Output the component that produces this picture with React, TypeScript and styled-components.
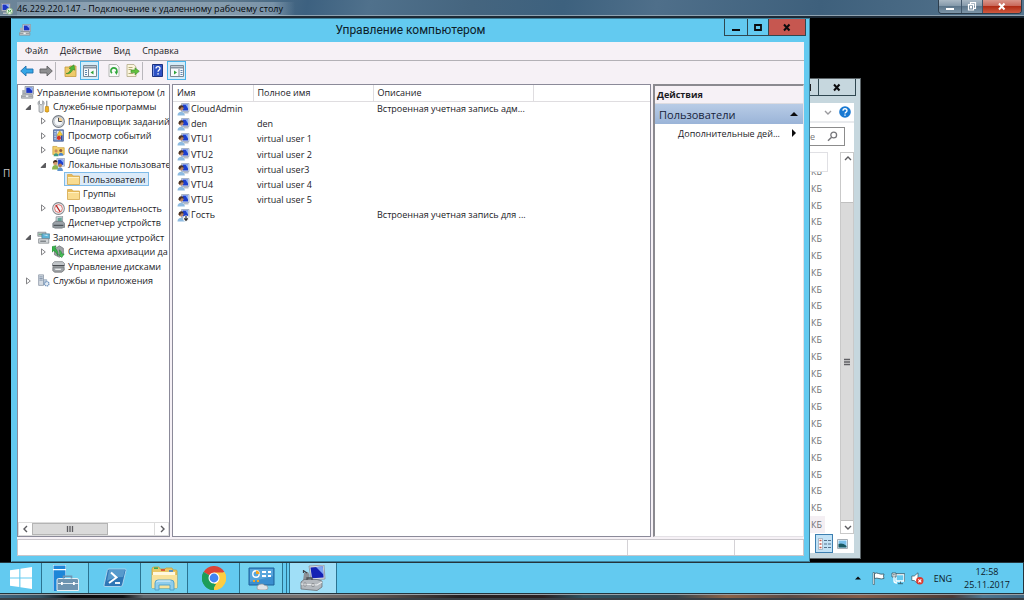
import React from "react";
import styled, { createGlobalStyle, css } from "styled-components";

const GlobalStyle = createGlobalStyle`
  *, *::before, *::after { box-sizing: border-box; }
  body { margin: 0; background: #000; font-family: "Open Sans", "Noto Sans", sans-serif; font-size: 9px; color: #1b1b1f; overflow: hidden; }
  button, input, table { font: inherit; color: inherit; }
  button { margin: 0; padding: 0; border: 0; background: none; display: flex; align-items: center; justify-content: center; }
  svg { display: block; flex: none; }
  ul { list-style: none; margin: 0; padding: 0; }
  h1, h2, p { margin: 0; font-weight: 400; }
`;

const Screen = styled.div`
  height: 100vh;
  display: flex;
  flex-direction: column;
  white-space: nowrap;
`;

/* ---------- outer remote session bar ---------- */

const HostBar = styled.header`
  flex: none;
  height: 18px;
  display: flex;
  align-items: flex-start;
  background: linear-gradient(100deg, #6d8599 0%, #5d788c 22%, #3d6180 30%, #50718c 36%, #45657f 46%, #3d617e 55%, #4f6f8a 64%, #3e607c 80%, #56758e 100%);
  border-bottom: 2px solid #1d2a36;
  box-shadow: inset 0 -1px 0 #8fa3b2;
`;

const HostTitle = styled.h1`
  flex: 1;
  display: flex;
  align-items: center;
  gap: 4px;
  height: 17px;
  padding-left: 1px;
  font-size: 9px;
  color: #05080c;
  span {
    padding-right: 12px;
    background: linear-gradient(90deg, rgba(190, 206, 220, 0.2), rgba(190, 206, 220, 0.45) 30%, rgba(190, 206, 220, 0.4) 92%, transparent);
    line-height: 14px;
  }
`;

const HostControls = styled.div`
  display: flex;
  height: 14px;
  margin-right: 2px;
  border: 1px solid #2d3e4d;
  border-top: 0;
  border-radius: 0 0 4px 4px;
  overflow: hidden;
`;

const HostButton = styled.button<{ $w: number; $danger?: boolean }>`
  width: ${(p) => p.$w}px;
  border-right: ${(p) => (p.$danger ? 0 : "1px solid #40566a")};
  background: ${(p) =>
    p.$danger
      ? "linear-gradient(#d9958a, #c9685a 45%, #b02c16 50%, #cf5a40)"
      : "linear-gradient(#a9b8c4, #8499aa 45%, #5c768b 50%, #7d95a8)"};
`;

/* ---------- desktop ---------- */

const Desktop = styled.main`
  flex: 1;
  position: relative;
  overflow: hidden;
  background: #000;
`;

const DesktopLabel = styled.p`
  padding: 148px 0 0 3px;
  font-size: 10px;
  line-height: 14px;
  color: #c8c8c8;
`;

const BackWindow = styled.section`
  position: absolute;
  top: 60px;
  right: 163px;
  bottom: 3px;
  width: 110px;
  display: flex;
  flex-direction: column;
  padding: 0 6px 5px 0;
  border: 1px solid #5c6468;
  background: #c6d7de;
`;

const MainWindow = styled.section`
  position: absolute;
  top: 0;
  left: 11px;
  right: 214px;
  bottom: 0;
  display: flex;
  flex-direction: column;
  padding: 0 5px 5px;
  border: 1px solid #3f7f99;
  border-left-color: #63caf0;
  background: #63caf0;
`;

const Caption = styled.header`
  flex: none;
  height: 23px;
  display: flex;
  align-items: flex-start;
  margin-right: -2px;
`;

const CaptionTitle = styled.h2`
  flex: 1;
  padding-left: 66px;
  text-align: center;
  font-family: Roboto, "Open Sans", sans-serif;
  font-size: 12px;
  line-height: 23px;
  color: #0d2029;
`;

const CaptionIcon = styled.span`
  padding: 5px 0 0 2px;
`;

const Controls = styled.div`
  display: flex;
  height: 17px;
  border: 1px solid #2f4750;
  border-top: 0;
`;

const ControlButton = styled.button<{ $w: number; $danger?: boolean }>`
  width: ${(p) => p.$w}px;
  border-left: 1px solid #2f4750;
  background: ${(p) => (p.$danger ? "#c65750" : "transparent")};
  &:first-child { border-left: 0; }
`;

const Client = styled.div`
  flex: 1;
  min-height: 0;
  display: flex;
  flex-direction: column;
  background: #f6f1f6;
`;

const MenuBar = styled.nav`
  flex: none;
  display: flex;
  gap: 12px;
  height: 19px;
  padding: 0 8px;
  border-bottom: 1px solid #b3b1b6;
  line-height: 18px;
`;

const Toolbar = styled.div`
  flex: none;
  display: flex;
  align-items: center;
  height: 23px;
  padding-bottom: 4px;
`;

const ToolButton = styled.button<{ $on?: boolean; $gap?: number }>`
  width: 19px;
  height: 19px;
  margin-left: ${(p) => p.$gap ?? 0}px;
  ${(p) =>
    p.$on &&
    css`
      border: 1px solid #4bb3e8;
      background: #d3ecf9;
    `}
`;

const ToolSeparator = styled.span`
  width: 1px;
  height: 18px;
  background: #b9b7bc;
`;

const Panes = styled.div`
  flex: 1;
  min-height: 0;
  display: grid;
  grid-template-columns: 153px minmax(0, 1fr) 151px;
  gap: 2px;
`;

const Pane = styled.section`
  display: flex;
  flex-direction: column;
  min-width: 0;
  overflow: hidden;
  background: #fff;
  border: 1px solid #8b8a99;
`;

const ActionsPane = styled(Pane)`
  border-color: #8b8a90 #e4e1e6 #e4e1e6 #8b8a90;
  border-width: 2px 1px 1px 2px;
`;

/* ---------- tree ---------- */

const Tree = styled.ul`
  flex: none;
  height: 203px;
  display: flex;
  flex-direction: column;
`;

const TreeRow = styled.li<{ $level: number }>`
  flex: 1;
  min-height: 0;
  display: flex;
  align-items: center;
  padding-left: ${(p) => [0, 4, 19, 34][p.$level]}px;
`;

const Twisty = styled.span`
  width: 12px;
  flex: none;
  display: flex;
  justify-content: center;
`;

const TreeLabel = styled.span<{ $selected?: boolean }>`
  display: flex;
  align-items: center;
  gap: 3px;
  height: 14px;
  padding: 0 2px;
  border: 1px solid ${(p) => (p.$selected ? "#7fbbe8" : "transparent")};
  background: ${(p) => (p.$selected ? "#dcebf9" : "transparent")};
`;

const HScroll = styled.div`
  display: flex;
  height: 14px;
  margin-top: auto;
  border: 1px solid #dcdcdc;
`;

const HThumb = styled.span`
  width: 76px;
  display: flex;
  align-items: center;
  justify-content: center;
  background: #dadada;
  border: 1px solid #b4b4b4;
`;

const ScrollButton = styled.button`
  width: 13px;
  height: 12px;
  flex: none;
`;

const ScrollGap = styled.span`
  flex: 1;
  border-right: 1px solid #dcdcdc;
`;

/* ---------- user list ---------- */

const UserTable = styled.table`
  width: 100%;
  height: 138px;
  border-collapse: collapse;
  table-layout: fixed;
  th, td { padding: 0 0 0 4px; text-align: left; font-weight: 400; line-height: 14px; }
  th { height: 16px; border-right: 1px solid #dfdde0; border-bottom: 1px solid #dfdde0; }
  th:last-child { border-right: 0; }
`;

const UserName = styled.span`
  display: flex;
  align-items: center;
  gap: 1px;
`;

/* ---------- actions ---------- */

const ActionsTitle = styled.h2`
  padding-left: 2px;
  background: #f6f1f6;
  border-bottom: 1px solid #dedce0;
  font-size: 9px;
  font-weight: 700;
  line-height: 17px;
`;

const ActionsGroup = styled.button`
  justify-content: space-between;
  height: 20px;
  padding: 0 5px 0 4px;
  background: linear-gradient(#b8cce6, #9ab4d8);
  font-size: 11px;
  color: #17243c;
`;

const ActionsItem = styled.button`
  justify-content: flex-end;
  gap: 10px;
  height: 18px;
  padding-right: 5px;
`;

const StatusBar = styled.footer`
  flex: none;
  height: 17px;
  margin-top: 2px;
  display: flex;
  justify-content: flex-end;
  background: #fff;
  border: 1px solid #c9c6cb;
  span { border-left: 1px solid #d4d2d6; }
  span:first-child { width: 107px; }
  span:last-child { width: 69px; }
`;

/* ---------- background explorer window ---------- */

const BackClient = styled.div`
  flex: 1;
  min-height: 0;
  display: flex;
  flex-direction: column;
  background: #fff;
`;

const BackCaption = styled.header`
  flex: none;
  display: flex;
  justify-content: flex-end;
  height: 24px;
  margin-right: -2px;
`;

const Ribbon = styled.div`
  flex: none;
  display: flex;
  align-items: center;
  justify-content: flex-end;
  gap: 7px;
  height: 20px;
  padding-right: 3px;
  border-bottom: 2px solid #e9ebee;
`;

const SearchRow = styled.label`
  flex: none;
  display: flex;
  align-items: center;
  height: 19px;
  margin: 4px 9px 6px 0;
  padding-right: 6px;
  border: 1px solid #8c8c8c;
`;

const SearchInput = styled.input`
  flex: 1;
  min-width: 0;
  padding: 0 12px 0 0;
  border: 0;
  background: none;
  text-align: right;
  color: #77777b;
  outline: none;
`;

const FileArea = styled.div`
  flex: 1;
  min-height: 0;
  display: flex;
`;

const FileColumn = styled.div`
  flex: 1;
  display: flex;
  flex-direction: column;
`;

const ColumnHeader = styled.div`
  flex: none;
  height: 20px;
  margin-right: 12px;
  margin-bottom: -9px;
  position: relative;
  background: #fff;
  border: 1px solid #e0e0e4;
`;

const SizeList = styled.ul`
  flex: 1;
  min-height: 0;
  display: flex;
  flex-direction: column;
  margin: 0 15px 1px 0;
`;

const SizeItem = styled.li<{ $hot?: boolean }>`
  flex: 1;
  min-height: 0;
  display: flex;
  align-items: center;
  justify-content: flex-end;
  padding-right: 3px;
  color: #707074;
  background: ${(p) => (p.$hot ? "#f4eff3" : "transparent")};
`;

const VScroll = styled.div`
  width: 14px;
  display: flex;
  flex-direction: column;
  border: 1px solid #c9c9c9;
`;

const VThumb = styled.span`
  flex: 1;
  margin-top: 37px;
  display: flex;
  align-items: center;
  justify-content: center;
  background: #dadada;
  border: 1px solid #c0c0c0;
  border-width: 1px 0;
`;

const ViewBar = styled.div`
  flex: none;
  display: flex;
  justify-content: flex-end;
  height: 19px;
  padding-right: 3px;
`;

const ViewButton = styled.button<{ $on?: boolean }>`
  width: 18px;
  height: 19px;
  border: ${(p) => (p.$on ? "1px solid #3c7fb1" : "0")};
  background: ${(p) => (p.$on ? "#c2e2f6" : "none")};
`;

/* ---------- taskbar ---------- */

const Taskbar = styled.footer`
  flex: none;
  display: flex;
  height: 32px;
  background: #63caf0;
  border: 1px solid #24343c;
  border-width: 1px 1px 1px 0;
`;

const TaskButton = styled.button<{ $w: number; $tone?: "open" | "active" }>`
  width: ${(p) => p.$w}px;
  border-right: 1px solid #2b7390;
  background: ${(p) => (p.$tone === "active" ? "#a0dff7" : p.$tone === "open" ? "#73d1ef" : "transparent")};
`;

const TaskStack = styled.span<{ $w: number }>`
  width: ${(p) => p.$w}px;
  border-right: 1px solid #2b7390;
`;

const Tray = styled.div`
  flex: 1;
  display: flex;
  align-items: center;
  justify-content: flex-end;
  padding-right: 13px;
  gap: 10px;
  color: #0d2029;
`;

const TrayIcons = styled.div`
  display: flex;
  align-items: center;
  gap: 6px;
`;

const Clock = styled.time`
  margin-left: 2px;
  text-align: center;
  line-height: 13px;
`;

const HostEdge = styled.div`
  flex: none;
  height: 6px;
  border: 1px solid #98a0a6;
  border-width: 1px 0;
  background: linear-gradient(90deg, #3f6580 0%, #35505f 4%, #0b0b0d 7%, #101114 12%, #5f656b 14%, #77716e 30%, #5b5451 37%, #241f20 45%, #2a2122 53%, #2f5261 57%, #37444b 66%, #8b6248 71%, #5a4a45 77%, #845c49 84%, #4b3a36 93%, #4e7690 96%, #41647e 100%);
  border-bottom: 2px solid #3a4046;
`;

/* ---------- icons ---------- */

type IconProps = { size?: number };

const ComputerIcon = ({ size = 13 }: IconProps) => (
  <svg width={size} height={size} viewBox="0 0 16 16">
    <path d="M5 0.5h10.5v9.5H5z" fill="#d6dae0" stroke="#8a909a" />
    <path d="M6.5 2h7.5v6.5H6.5z" fill="#1b35c4" />
    <path d="M10 2h4v4z" fill="#8fb0f4" />
    <path d="M1.500 5h3.500v5H1.500z" fill="#aab0b8" />
    <path d="M0.5 12l2-2h10l2 1.500v3.500H.5z" fill="#c3c7cb" stroke="#7d8288" strokeWidth=".8" />
    <path d="M1 12.500h13" stroke="#74797f" strokeWidth=".8" />
    <path d="M6 11.500h3v2H6z" fill="#eef0f2" />
  </svg>
);

const RemoteIcon = () => (
  <svg width="12" height="13" viewBox="0 0 12 13">
    <path d="M.5 1.500h8.500v7.500H.5z" fill="#d6dae0" stroke="#8a909a" />
    <path d="M1.500 2.500H8V8H1.500z" fill="#1b35c4" />
    <path d="M4.500 2.500H8V6z" fill="#8fb0f4" />
    <path d="M2 10.500h5v1.500H2z" fill="#b9bec5" />
    <circle cx="8.500" cy="9.200" r="3.200" fill="#e6f2e4" stroke="#7aa575" strokeWidth=".7" />
    <path d="M6.800 7.800l1.500 1.400-1.500 1.400M10.200 7.800L8.900 9.200l1.300 1.400" fill="none" stroke="#2e9a35" strokeWidth=".9" />
  </svg>
);

const UserIcon = ({ guest }: { guest?: boolean }) => (
  <svg width="13" height="13" viewBox="0 0 12 13">
    <path d="M4 .5h7.500v8H4z" fill="#dce3f0" stroke="#a9b4c8" />
    <path d="M5 1.500h5.500v6H5z" fill="#1c3fce" />
    <path d="M8 1.500h2.500v4z" fill="#8aaef6" />
    <path d="M6 9h5v1.500H6z" fill="#b7bcc6" />
    <circle cx="3.600" cy="5.200" r="2.400" fill="#b98460" />
    <path d="M1 5.500c0-4 5-4.300 5.200-1L4 4.200 2.200 6.500z" fill="#4a3226" />
    <path d="M0 12.500c0-5 7-5 7.400 0z" fill="#8fbce2" />
    {guest && (
      <>
        <circle cx="8.500" cy="9.500" r="3" fill="#f2f2f2" />
        <path d="M8.500 7v4M6.800 9.400l1.700 2 1.700-2" fill="none" stroke="#222" strokeWidth="1.100" />
      </>
    )}
  </svg>
);

const ToolsIcon = () => (
  <svg width="13" height="13" viewBox="0 0 16 16">
    <path d="M3 1v4l2 1 2-1V1c2 1 2.500 4 .5 6v7.500q-2.500 2-5 0V7C.5 5 1 2 3 1z" fill="#d7dadd" stroke="#82878c" strokeWidth=".9" />
    <path d="M12 1v7" stroke="#8c9196" strokeWidth="1.500" />
    <path d="M10.500 8h3.500l.5 6q-2 2-4.500 0z" fill="#f0b322" stroke="#b77d10" strokeWidth=".8" />
  </svg>
);

const ClockIcon = () => (
  <svg width="13" height="13" viewBox="0 0 16 16">
    <circle cx="8" cy="8" r="7.200" fill="#dfe3e8" stroke="#777d85" strokeWidth="1.300" />
    <circle cx="8" cy="8" r="5.300" fill="#f6f8fb" stroke="#a9afb6" strokeWidth=".7" />
    <path d="M8 8V3a5 5 0 0 1 5 5z" fill="#f3cf8f" />
    <path d="M8 3.500V8h4" fill="none" stroke="#42474e" strokeWidth="1.200" />
  </svg>
);

const EventIcon = () => (
  <svg width="13" height="13" viewBox="0 0 16 16">
    <path d="M2 1h12v14H2z" fill="#7b98cc" stroke="#43598c" />
    <path d="M3 3h1.500M3 6h1.500M3 9h1.500M3 12h1.500" stroke="#fff" />
    <path d="M6 2.500h7v11H6z" fill="#dde6f4" />
    <path d="M9.500 2l3.500 6H6z" fill="#f7cf32" stroke="#b08912" strokeWidth=".6" />
    <circle cx="8.500" cy="11" r="2.600" fill="#d13529" />
    <path d="M12 8v6" stroke="#2a4fa8" strokeWidth="2" />
  </svg>
);

const SharedIcon = () => (
  <svg width="13" height="13" viewBox="0 0 16 16">
    <path d="M1 3h5l1.500 1.500H15V13H1z" fill="#f3cf6b" stroke="#c5972f" strokeWidth=".8" />
    <circle cx="5" cy="8.500" r="1.900" fill="#c78b5c" />
    <path d="M2 15c0-5 6-5 6 0z" fill="#3f9a83" />
    <circle cx="10.800" cy="8" r="1.900" fill="#8e5b3b" />
    <path d="M8 14.500c0-5 6-5 6 0z" fill="#4d84c8" />
  </svg>
);

const LocalUsersIcon = () => (
  <svg width="13" height="13" viewBox="0 0 16 16">
    <path d="M6 .5h9.500V10H6z" fill="#dce3f0" stroke="#98a3b8" />
    <path d="M7.500 2H14v6.500H7.500z" fill="#1c3fce" />
    <path d="M10.500 2H14v4z" fill="#8aaef6" />
    <circle cx="4" cy="6" r="2.700" fill="#d39a6c" />
    <path d="M1.200 6c0-5 6-4.500 5.600-.7L4 4.800z" fill="#3e2a20" />
    <path d="M0 14c0-7 8-7 8 0z" fill="#8db44f" />
    <circle cx="10" cy="9" r="2.300" fill="#b9794f" />
    <path d="M6.500 16c0-6 7-6 7 0z" fill="#5f94cf" />
  </svg>
);

const FolderIcon = () => (
  <svg width="13" height="12" viewBox="0 0 13 12">
    <path d="M.5 1.500H5l1 1.500h6.500v8.500H.5z" fill="#e8ba58" stroke="#d6ab52" strokeWidth=".8" />
    <path d="M1 5h11v6H1z" fill="#f9dc90" />
    <path d="M1 4.500h11" stroke="#fff1c4" />
  </svg>
);

const PerfIcon = () => (
  <svg width="13" height="13" viewBox="0 0 16 16">
    <circle cx="8" cy="8" r="7.200" fill="#f4f4f5" stroke="#85898f" strokeWidth="1.300" />
    <circle cx="8" cy="8" r="4.800" fill="none" stroke="#d9605b" strokeWidth="1.100" />
    <path d="M5 4l5 8" stroke="#b9201f" strokeWidth="1.700" />
  </svg>
);

const DevicesIcon = () => (
  <svg width="13" height="13" viewBox="0 0 16 16">
    <path d="M5 1l8-1v7H5z" fill="#cfd6db" stroke="#7b858d" strokeWidth=".8" />
    <path d="M7 2.500l5-.7V6H7z" fill="#63a69a" />
    <path d="M1 9l3-2.500h9L15.500 9v5H1z" fill="#9aa1a7" stroke="#5f666c" strokeWidth=".8" />
    <path d="M2 11.500h12" stroke="#4a4f54" strokeWidth="1.400" />
    <path d="M3 15h10" stroke="#7b8086" />
  </svg>
);

const StorageIcon = () => (
  <svg width="13" height="13" viewBox="0 0 16 16">
    <path d="M1 1.500h10v5H1z" fill="#bfc5ca" stroke="#767d83" strokeWidth=".8" />
    <path d="M2 4h6" stroke="#49a35a" />
    <path d="M6 3.500h9.500v6H6z" fill="#5bb2d5" stroke="#4a7d96" strokeWidth=".8" />
    <path d="M7 4.500h6v2z" fill="#c7e9f5" />
    <path d="M2 9.500h12.500v5.500H2z" fill="#d3d7da" stroke="#6f757a" strokeWidth=".8" />
    <path d="M4 12.500h7" stroke="#565b60" strokeWidth="1.200" />
  </svg>
);

const BackupIcon = () => (
  <svg width="13" height="13" viewBox="0 0 16 16">
    <path d="M3 5l6-4 5 3v8l-5 3-6-3z" fill="#9fa3a6" stroke="#66696c" strokeWidth=".8" />
    <path d="M0 2l5-1-1 3c2 2 4 5 3 9-1-3-3-5-5-6L0 9z" fill="#39b44a" stroke="#17752a" strokeWidth=".6" />
    <path d="M9 6c2 1 3 3 3 5h3l-3 4.500L8 12h2c0-2-1-4-1-6z" fill="#4cc25a" stroke="#17752a" strokeWidth=".6" />
  </svg>
);

const DiskIcon = () => (
  <svg width="13" height="13" viewBox="0 0 16 16">
    <path d="M3 2h10l2.500 2.500v3H.5v-3z" fill="#c2c6c9" stroke="#6b7075" strokeWidth=".8" />
    <path d="M1 7h14" stroke="#3f4347" strokeWidth="1.500" />
    <path d="M1 9h14v3.500L12 15H3l-2-2z" fill="#a0a4a8" stroke="#5c6165" strokeWidth=".8" />
    <path d="M4 11.500h7" stroke="#eceeef" strokeWidth="1.500" />
  </svg>
);

const ServicesIcon = () => (
  <svg width="13" height="13" viewBox="0 0 16 16">
    <path d="M2 1h6v13H2z" fill="#d5dbe2" stroke="#8490a0" strokeWidth=".9" />
    <path d="M3 3.500h4M3 5.500h4M3 7.500h4" stroke="#7587a0" />
    <path d="M8 7h4v6H8z" fill="#bccbdc" stroke="#8094ac" strokeWidth=".7" />
    <circle cx="12" cy="12" r="2.700" fill="#e2ebf4" stroke="#6f93bd" strokeWidth="1.600" strokeDasharray="1.500 .7" />
  </svg>
);

const ArrowIcon = ({ right }: { right?: boolean }) => (
  <svg width="14" height="12" viewBox="0 0 14 12">
    <path
      d={right ? "M13.300 6L8 1v3H1v4h7v3z" : "M.7 6L6 1v3h7v4H6v3z"}
      fill={right ? "#8e8e90" : "#36a6e6"}
      stroke={right ? "#626264" : "#1e6fae"}
      strokeWidth=".9"
    />
  </svg>
);

const UpFolderIcon = () => (
  <svg width="13" height="13" viewBox="0 0 13 13">
    <path d="M1 3h4l1-1h6v10.500H1z" fill="#efca6a" stroke="#c29a3e" strokeWidth=".8" />
    <path d="M2 9.500c3 0 4-2.500 5-4.500L5 4.200 10 .8l.8 5.400L9 5.400C7.500 8.500 5 10.500 2 9.500z" fill="#4db63a" stroke="#2c7d22" strokeWidth=".5" />
  </svg>
);

const PaneIcon = ({ side }: { side: "left" | "right" }) => (
  <svg width="14" height="12" viewBox="0 0 14 12">
    <path d="M.5.500h13v11H.5z" fill="#f7fafc" stroke="#7b8894" />
    <path d="M1 1.500h12v2H1z" fill="#8795a2" />
    <path d={side === "left" ? "M5.500 4v7" : "M9 4v7"} stroke="#7b8894" />
    <path d={side === "left" ? "M2 5.500h2M2 7.500h2M2 9.500h2" : "M10.500 5.500h2M10.500 7.500h2M10.500 9.500h2"} stroke="#5c86ae" />
    <path d={side === "left" ? "M10.500 5.500v4L7.500 7.500z" : "M4 5.500v4l3-2z"} fill="#2fa43a" />
  </svg>
);

const RefreshIcon = () => (
  <svg width="12" height="13" viewBox="0 0 12 13">
    <path d="M1 .5h7.500L11 3v9.500H1z" fill="#f8faf8" stroke="#a4a8a4" strokeWidth=".8" />
    <path d="M4 9.200A3 3 0 1 1 8 9" fill="none" stroke="#31a73d" strokeWidth="1.600" />
    <path d="M6.500 7.500H10L8.500 11z" fill="#31a73d" />
  </svg>
);

const ExportIcon = () => (
  <svg width="14" height="13" viewBox="0 0 14 13">
    <path d="M1 .5h7L10 3v9.500H1z" fill="#fbf6dd" stroke="#b1a886" strokeWidth=".8" />
    <path d="M2.500 3.500h4M2.500 5.500h3M2.500 9.500h5" stroke="#b3a878" />
    <path d="M5 6h4V3.800L13.300 7.300 9 10.800V8.600H5z" fill="#62c23e" stroke="#39892a" strokeWidth=".6" />
  </svg>
);

const HelpIcon = () => (
  <svg width="11" height="13" viewBox="0 0 11 13">
    <path d="M.5.500h10v12H.5z" fill="#2e52c4" stroke="#1c3280" />
    <path d="M1.500 1v11" stroke="#7d97e4" />
    <path d="M4 4.500c0-2.600 4-2.600 4 0 0 1.500-2 1.500-2 3.300" fill="none" stroke="#fff" strokeWidth="1.300" />
    <path d="M5.300 9.300h1.500v1.300H5.300z" fill="#fff" />
  </svg>
);

const TwistyIcon = ({ open }: { open: boolean }) => (
  <svg width="7" height="8" viewBox="0 0 7 8">
    {open ? <path d="M5.500 2v4.500H1z" fill="#5a5a5e" stroke="#3a3a3e" strokeWidth=".7" /> : <path d="M1.500.900v6L5.300 4z" fill="#fff" stroke="#77777b" strokeWidth=".9" />}
  </svg>
);

const Chevron = ({ d, color = "#5c5c60" }: { d: "left" | "right" | "up" | "down"; color?: string }) => {
  const paths = { left: "M5 1L2 4l3 3", right: "M3 1l3 3-3 3", up: "M1 5l3-3 3 3", down: "M1 3l3 3 3-3" };
  return (
    <svg width="8" height="8" viewBox="0 0 8 8">
      <path d={paths[d]} fill="none" stroke={color} strokeWidth="1.400" />
    </svg>
  );
};

const Glyph = ({ kind, color = "#0b0b0d" }: { kind: "min" | "max" | "close" | "restore"; color?: string }) => (
  <svg width="10" height="9" viewBox="0 0 10 9">
    {kind === "min" && <path d="M1 6h8v2H1z" fill={color} />}
    {kind === "max" && <path d="M2 2h6v5H2z" fill="none" stroke={color} strokeWidth="1.800" />}
    {kind === "close" && <path d="M2 1.500l5.500 6M7.500 1.500l-5.500 6" stroke={color} strokeWidth="2" />}
    {kind === "restore" && (
      <path d="M3.500 2V.7h5v5.600H7M1.500 2.700h5v5.300h-5zM3.500 4.500h1v1.500h-1z" fill="none" stroke={color} strokeWidth="1.200" />
    )}
  </svg>
);

const WindowsIcon = () => (
  <svg width="22" height="22" viewBox="0 0 22 22">
    <path d="M0 3.300l9.300-1.400v8.500H0zM10.400 1.700L22 0v10.400H10.400zM0 11.500h9.300V20L0 18.700zM10.400 11.500H22V22l-11.600-1.700z" fill="#fff" />
  </svg>
);

const ServerManagerIcon = () => (
  <svg width="27" height="26" viewBox="0 0 27 26">
    <path d="M1 0h13v26H1z" fill="#fff" />
    <path d="M1.500.500h12V4h-12zM1.500 5.200h12V26h-12z" fill="#1e86d8" />
    <path d="M5 15q0-1.500 1.500-1.500H25q1.500 0 1.500 1.500v10.500H5z" fill="#6e94b0" stroke="#e8f1f6" />
    <path d="M11.500 13.500v-2.300h8v2.300" fill="none" stroke="#6e94b0" strokeWidth="1.600" />
    <path d="M6 18.500h20" stroke="#dfe9ef" strokeWidth="1" />
    <path d="M9 17h1.800v3H9zM21 17h1.800v3H21z" fill="#fff" />
  </svg>
);

const PowerShellIcon = () => (
  <svg width="24" height="20" viewBox="0 0 24 20">
    <path d="M6 1h16q1.500 0 1 1.500L19.500 17q-.4 1.500-2 1.500H2q-1.500 0-1-1.500L4.300 2.300Q4.600 1 6 1z" fill="#2e76b6" stroke="#a9d3ec" />
    <path d="M6 2h16l-2 7Q10 9 4 13z" fill="#6aa9d6" opacity=".7" />
    <path d="M8 4.500l5.500 5L6 15" fill="none" stroke="#fff" strokeWidth="2" />
    <path d="M12 15h5" stroke="#fff" strokeWidth="1.800" />
  </svg>
);

const ExplorerIcon = () => (
  <svg width="27" height="25" viewBox="0 0 27 25">
    <path d="M1 3q0-2 2-2h5l1 2h5l1-1h6l1 2h3q1 0 1 1v17H1z" fill="#e9c867" stroke="#c79e3a" strokeWidth=".8" />
    <path d="M2 6h22v3H2z" fill="#fff8df" />
    <path d="M3 2.200h4" stroke="#34a853" strokeWidth="1.600" />
    <path d="M10 4h4" stroke="#d6402f" strokeWidth="1.600" />
    <path d="M18 5h4" stroke="#3b86d4" strokeWidth="1.600" />
    <path d="M1 9h25v13H1z" fill="#f8e29b" />
    <path d="M4 24v-7q0-3 3-3h13q3 0 3 3v7h-4v-5H8v5z" fill="#8ecdec" stroke="#4c9fcb" strokeWidth=".9" />
    <path d="M5.500 16q1-1 2-1h12" stroke="#e9f7fd" fill="none" />
  </svg>
);

const ChromeIcon = () => (
  <svg width="24" height="24" viewBox="0 0 24 24">
    <path d="M12 12L1.600 6A12 12 0 0 1 22.400 6z" fill="#dc4437" />
    <path d="M12 12L22.400 6A12 12 0 0 1 12 24z" fill="#fccd42" />
    <path d="M12 12v12A12 12 0 0 1 1.600 6z" fill="#1d9d58" />
    <path d="M12 6.500h10.700A12 12 0 0 1 12 24l5-9z" fill="#fccd42" />
    <path d="M1.600 6L7 15l5 3 2 0-3.400 6A12 12 0 0 1 1.600 6z" fill="#1d9d58" />
    <circle cx="12" cy="12" r="5.500" fill="#fff" />
    <circle cx="12" cy="12" r="4.400" fill="#4285f4" />
  </svg>
);

const ControlPanelIcon = () => (
  <svg width="27" height="24" viewBox="0 0 27 24">
    <path d="M1 2h25v17H1z" fill="#3b8fd0" stroke="#1e6199" />
    <path d="M2 3h23v7L2 16z" fill="#6db4e4" opacity=".6" />
    <circle cx="8" cy="8" r="3.200" fill="none" stroke="#fff" strokeWidth="1.400" />
    <path d="M8 8V4.500A3.500 3.500 0 0 1 11.500 8z" fill="#f5a623" />
    <path d="M14 6h4M14 10h4M20 6h3M20 10h3" stroke="#fff" strokeWidth="1.800" />
    <path d="M5 15h2M9 15h2" stroke="#f5a623" strokeWidth="1.800" />
    <path d="M9 22q0-4 5-4 2 0 2 1 4 0 4 3 0 2-3 2h-5q-3 0-3-2z" fill="#dfe3e6" stroke="#8b9196" strokeWidth=".7" />
  </svg>
);

const ManagementIcon = () => (
  <svg width="26" height="26" viewBox="0 0 26 26">
    <path d="M9 1l15-1 1 14-14 1z" fill="#d7dbe2" stroke="#8b919b" strokeWidth=".8" />
    <path d="M10.500 2.500l12.300-1 .8 11L12 13.300z" fill="#1422b4" />
    <path d="M16 2.100l6.800-.6.600 8z" fill="#7da2f2" />
    <path d="M4 8l4-1 1.500 3v6H3z" fill="#8b9096" />
    <path d="M4 6l3 2M3.500 8V5" stroke="#3f4246" strokeWidth="1.200" />
    <path d="M1 17l3-2.500h13l5 1.500v6l-5 3.500L1 24z" fill="#b4b9be" stroke="#6d7176" strokeWidth=".8" />
    <path d="M1 19l16 1 5-3" fill="none" stroke="#eceeef" strokeWidth="1.200" />
    <path d="M7 15v-2h5v2" fill="none" stroke="#4d5156" strokeWidth="1.300" />
    <path d="M4 18h2v3H4zM12 18.500h2v3h-2z" fill="#eef0f1" stroke="#5d6166" strokeWidth=".5" />
  </svg>
);

const FlagIcon = () => (
  <svg width="14" height="13" viewBox="0 0 14 13">
    <path d="M2 .5h1.500V12.500H2z" fill="#fff" stroke="#33515e" strokeWidth=".6" />
    <path d="M3.500 1.500q2-1 4 0t5.500.5q-1 2 0 4.500-3 .8-5 0t-4.500 0z" fill="#fff" stroke="#33515e" strokeWidth=".8" />
  </svg>
);

const NetworkIcon = () => (
  <svg width="14" height="13" viewBox="0 0 14 13">
    <path d="M5 2.500h8v6.500H5z" fill="#63caf0" stroke="#fff" strokeWidth="1.300" />
    <path d="M4.200 1.700h9.600v8.100M7 11.700h5M9.500 9.500v2" fill="none" stroke="#33515e" strokeWidth=".8" />
    <path d="M1 1h4v4H1z" fill="#fff" stroke="#33515e" strokeWidth=".8" />
    <path d="M3 5v4q0 2 3 2" fill="none" stroke="#fff" strokeWidth="1.300" />
    <path d="M2.500 2v1.500M3.700 2v1.500" stroke="#33515e" strokeWidth=".6" />
  </svg>
);

const SpeakerIcon = () => (
  <svg width="13" height="13" viewBox="0 0 13 13">
    <path d="M.8 4h2.400L7 .8v11L3.200 8.500H.8z" fill="#fff" stroke="#33515e" strokeWidth=".7" />
    <circle cx="8.800" cy="8.800" r="3.700" fill="#dc3b30" />
    <path d="M7.300 7.300l3 3M10.300 7.300l-3 3" stroke="#fff" strokeWidth="1.200" />
  </svg>
);

const Triangle = ({ d, size = 8 }: { d: "up" | "right"; size?: number }) => (
  <svg width={size} height={size} viewBox="0 0 8 8">
    <path d={d === "up" ? "M0 6l4-4 4 4z" : "M2 0l4 4-4 4z"} fill="#0b0b0d" />
  </svg>
);

const Grip = ({ vertical }: { vertical?: boolean }) => (
  <svg width="8" height="8" viewBox="0 0 8 8">
    <path d={vertical ? "M1 1.500h6M1 4h6M1 6.500h6" : "M1.500 1v6M4 1v6M6.500 1v6"} stroke="#5f5f63" strokeWidth="1.300" />
  </svg>
);

/* ---------- data ---------- */

type Node = { text: string; level: number; icon: React.ReactNode; open?: boolean; selected?: boolean };

const nodes: Node[] = [
  { text: "Управление компьютером (л", level: 0, icon: <ComputerIcon /> },
  { text: "Служебные программы", level: 1, icon: <ToolsIcon />, open: true },
  { text: "Планировщик заданий", level: 2, icon: <ClockIcon />, open: false },
  { text: "Просмотр событий", level: 2, icon: <EventIcon />, open: false },
  { text: "Общие папки", level: 2, icon: <SharedIcon />, open: false },
  { text: "Локальные пользовате", level: 2, icon: <LocalUsersIcon />, open: true },
  { text: "Пользователи", level: 3, icon: <FolderIcon />, selected: true },
  { text: "Группы", level: 3, icon: <FolderIcon /> },
  { text: "Производительность", level: 2, icon: <PerfIcon />, open: false },
  { text: "Диспетчер устройств", level: 2, icon: <DevicesIcon /> },
  { text: "Запоминающие устройст", level: 1, icon: <StorageIcon />, open: true },
  { text: "Система архивации да", level: 2, icon: <BackupIcon />, open: false },
  { text: "Управление дисками", level: 2, icon: <DiskIcon /> },
  { text: "Службы и приложения", level: 1, icon: <ServicesIcon />, open: false },
];

const users = [
  ["CloudAdmin", "", "Встроенная учетная запись адм..."],
  ["den", "den", ""],
  ["VTU1", "virtual user 1", ""],
  ["VTU2", "virtual user 2", ""],
  ["VTU3", "virtual user3", ""],
  ["VTU4", "virtual user 4", ""],
  ["VTU5", "virtual user 5", ""],
  ["Гость", "", "Встроенная учетная запись для ..."],
];

export default function App() {
  return (
    <Screen>
      <GlobalStyle />
      <HostBar>
        <HostTitle>
          <RemoteIcon />
          <span>46.229.220.147 - Подключение к удаленному рабочему столу</span>
        </HostTitle>
        <HostControls>
          <HostButton $w={23} aria-label="Свернуть"><Glyph kind="min" color="#fff" /></HostButton>
          <HostButton $w={21} aria-label="Восстановить"><Glyph kind="restore" color="#fff" /></HostButton>
          <HostButton $w={38} $danger aria-label="Закрыть"><Glyph kind="close" color="#fff" /></HostButton>
        </HostControls>
      </HostBar>

      <Desktop>
        <DesktopLabel>П</DesktopLabel>

        <BackWindow>
          <BackCaption>
            <Controls>
              <ControlButton $w={22} aria-label="Развернуть"><Glyph kind="max" /></ControlButton>
              <ControlButton $w={37} aria-label="Закрыть"><Glyph kind="close" /></ControlButton>
            </Controls>
          </BackCaption>
          <BackClient>
            <Ribbon>
              <Chevron d="down" color="#9a9a9e" />
              <svg width="12" height="12" viewBox="0 0 12 12">
                <circle cx="6" cy="6" r="5.800" fill="#1979d2" />
                <path d="M4 4.700c0-2.600 4-2.600 4 0C8 6.200 6 6 6 7.500" fill="none" stroke="#fff" strokeWidth="1.300" />
                <path d="M5.300 8.500h1.400v1.300H5.300z" fill="#fff" />
              </svg>
            </Ribbon>
            <SearchRow>
              <SearchInput aria-label="Поиск" defaultValue="е" />
              <svg width="11" height="11" viewBox="0 0 11 11">
                <circle cx="6.700" cy="4" r="2.900" fill="none" stroke="#77777b" strokeWidth="1.300" />
                <path d="M4.600 6.200L1 9.800" stroke="#77777b" strokeWidth="1.500" />
              </svg>
            </SearchRow>
            <FileArea>
              <FileColumn>
                <ColumnHeader />
                <SizeList>
                  {Array.from({ length: 22 }, (_, i) => (
                    <SizeItem key={i} $hot={i === 21}>КБ</SizeItem>
                  ))}
                </SizeList>
              </FileColumn>
              <VScroll>
                <ScrollButton aria-label="Вверх"><Chevron d="up" /></ScrollButton>
                <VThumb><Grip vertical /></VThumb>
                <ScrollButton aria-label="Вниз"><Chevron d="down" /></ScrollButton>
              </VScroll>
            </FileArea>
            <ViewBar>
              <ViewButton $on aria-label="Таблица">
                <svg width="13" height="12" viewBox="0 0 13 12">
                  <path d="M.5.500h4v11h-4z" fill="#fff" stroke="#8fa5b8" strokeWidth=".7" />
                  <path d="M1.500 2.500h2M1.500 6h2M1.500 9.500h2" stroke="#c4574d" strokeWidth="1.300" />
                  <path d="M6 2.500h3M10 2.500h3M6 6h3M10 6h3M6 9.500h3M10 9.500h3" stroke="#54718c" />
                </svg>
              </ViewButton>
              <ViewButton aria-label="Эскизы">
                <svg width="11" height="10" viewBox="0 0 11 10">
                  <path d="M.5.500h10v9H.5z" fill="#fff" stroke="#a5adb4" />
                  <path d="M1.500 1.500h8v7h-8z" fill="#7cc0ea" />
                  <path d="M1.500 5q4-1.500 8 2v1.500h-8z" fill="#1c5a63" />
                </svg>
              </ViewButton>
            </ViewBar>
          </BackClient>
        </BackWindow>

        <MainWindow>
          <Caption>
            <CaptionIcon><ComputerIcon size={12} /></CaptionIcon>
            <CaptionTitle>Управление компьютером</CaptionTitle>
            <Controls>
              <ControlButton $w={22} aria-label="Свернуть"><Glyph kind="min" /></ControlButton>
              <ControlButton $w={21} aria-label="Развернуть"><Glyph kind="max" /></ControlButton>
              <ControlButton $w={37} $danger aria-label="Закрыть"><Glyph kind="close" /></ControlButton>
            </Controls>
          </Caption>
          <Client>
            <MenuBar>
              <button>Файл</button>
              <button>Действие</button>
              <button>Вид</button>
              <button>Справка</button>
            </MenuBar>
            <Toolbar>
              <ToolButton aria-label="Назад"><ArrowIcon /></ToolButton>
              <ToolButton aria-label="Вперед"><ArrowIcon right /></ToolButton>
              <ToolSeparator />
              <ToolButton $gap={5} aria-label="Вверх"><UpFolderIcon /></ToolButton>
              <ToolButton $on aria-label="Дерево консоли"><PaneIcon side="left" /></ToolButton>
              <ToolButton $gap={5} aria-label="Обновить"><RefreshIcon /></ToolButton>
              <ToolButton aria-label="Экспорт"><ExportIcon /></ToolButton>
              <ToolSeparator />
              <ToolButton $gap={5} aria-label="Справка"><HelpIcon /></ToolButton>
              <ToolButton $on aria-label="Панель действий"><PaneIcon side="right" /></ToolButton>
            </Toolbar>
            <Panes>
              <Pane>
                <Tree>
                  {nodes.map((n) => (
                    <TreeRow key={n.text} $level={n.level}>
                      {n.level > 0 && <Twisty>{n.open !== undefined && <TwistyIcon open={n.open} />}</Twisty>}
                      <TreeLabel $selected={n.selected}>
                        {n.icon}
                        {n.text}
                      </TreeLabel>
                    </TreeRow>
                  ))}
                </Tree>
                <HScroll>
                  <ScrollButton aria-label="Влево"><Chevron d="left" /></ScrollButton>
                  <HThumb><Grip /></HThumb>
                  <ScrollGap />
                  <ScrollButton aria-label="Вправо"><Chevron d="right" /></ScrollButton>
                </HScroll>
              </Pane>
              <Pane>
                <UserTable>
                  <colgroup>
                    <col style={{ width: 80 }} />
                    <col style={{ width: 120 }} />
                    <col style={{ width: 160 }} />
                    <col />
                  </colgroup>
                  <thead>
                    <tr>
                      <th>Имя</th>
                      <th>Полное имя</th>
                      <th>Описание</th>
                      <th aria-label="Пусто" />
                    </tr>
                  </thead>
                  <tbody>
                    {users.map(([name, full, about]) => (
                      <tr key={name}>
                        <td>
                          <UserName><UserIcon guest={name === "Гость"} />{name}</UserName>
                        </td>
                        <td>{full}</td>
                        <td>{about}</td>
                        <td />
                      </tr>
                    ))}
                  </tbody>
                </UserTable>
              </Pane>
              <ActionsPane>
                <ActionsTitle>Действия</ActionsTitle>
                <ActionsGroup>Пользователи<Triangle d="up" /></ActionsGroup>
                <ActionsItem>Дополнительные дей...<Triangle d="right" /></ActionsItem>
              </ActionsPane>
            </Panes>
            <StatusBar><span /><span /></StatusBar>
          </Client>
        </MainWindow>
      </Desktop>

      <Taskbar>
        <TaskButton $w={42} aria-label="Пуск"><WindowsIcon /></TaskButton>
        <TaskButton $w={47} $tone="open" aria-label="Диспетчер серверов"><ServerManagerIcon /></TaskButton>
        <TaskButton $w={52} aria-label="PowerShell"><PowerShellIcon /></TaskButton>
        <TaskButton $w={47} $tone="open" aria-label="Проводник"><ExplorerIcon /></TaskButton>
        <TaskButton $w={52} aria-label="Chrome"><ChromeIcon /></TaskButton>
        <TaskButton $w={43} $tone="open" aria-label="Панель управления"><ControlPanelIcon /></TaskButton>
        <TaskStack $w={4} />
        <TaskStack $w={3} />
        <TaskButton $w={47} $tone="active" aria-label="Управление компьютером"><ManagementIcon /></TaskButton>
        <Tray>
          <Triangle d="up" size={6} />
          <TrayIcons>
            <FlagIcon />
            <NetworkIcon />
            <SpeakerIcon />
          </TrayIcons>
          <span>ENG</span>
          <Clock>12:58<br />25.11.2017</Clock>
        </Tray>
      </Taskbar>
      <HostEdge />
    </Screen>
  );
}
